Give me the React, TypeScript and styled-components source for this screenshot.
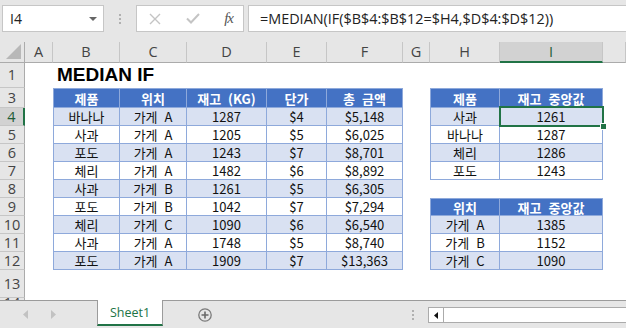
import React from 'react'
import styled, { createGlobalStyle, css } from 'styled-components'

const GREEN = '#217346'
const GRID_LINE = '#c6c6c6'
const TABLE_LINE = '#8ea9db'

const GlobalStyle = createGlobalStyle`
  html, body {
    margin: 0;
    padding: 0;
    background: #fff;
  }
  body {
    width: 626px;
    height: 328px;
    overflow: hidden;
    font-family: "Open Sans", "Noto Sans CJK KR", sans-serif;
  }
`

/* ---------- formula bar ---------- */

const TopBar = styled.div`
  height: 42px;
  box-sizing: border-box;
  padding-top: 5px;
  background: #e6e6e6;
  display: flex;
  align-items: flex-start;
`

const Box = styled.div`
  height: 27px;
  box-sizing: border-box;
  background: #fff;
  border: 1px solid ${GRID_LINE};
  display: flex;
  align-items: center;
`

const NameBox = styled(Box)`
  margin-left: 2px;
  width: 102px;
  padding: 0 6px 0 7px;
  justify-content: space-between;
  font-size: 14px;
  color: #222;
`

const DropArrow = styled.span`
  width: 0;
  height: 0;
  border-left: 4px solid transparent;
  border-right: 4px solid transparent;
  border-top: 4px solid #666;
`

const Grip = styled.div<{ $w: number; $h?: number }>`
  width: ${(p) => p.$w}px;
  height: ${(p) => p.$h ?? 27}px;
  display: flex;
  flex-direction: column;
  align-items: center;
  justify-content: center;
  gap: 2px;
  & > i {
    width: 2px;
    height: 2px;
    background: #b0b0b0;
  }
`

const FxBox = styled(Box)`
  width: 108px;
  padding: 0 10px 0 12px;
  justify-content: space-between;
`

const FxLabel = styled.span`
  font-family: "Liberation Serif", serif;
  font-style: italic;
  font-size: 15px;
  color: #555;
  letter-spacing: -1px;
`

const FormulaBox = styled(Box)`
  margin-left: 4px;
  flex: 1;
  border-right: none;
  padding-left: 11px;
  font-size: 14.4px;
  color: #222;
  white-space: nowrap;
`

/* ---------- sheet grid ---------- */

const Sheet = styled.div`
  display: grid;
  grid-template-columns: 25px 28px 67px 67px 80px 60px 76px 27px 70px 103px 1fr;
  grid-template-rows: 21px 25px 20px repeat(9, 18px) 28px 2px;
  background: #fff;
  overflow: hidden;
`

const HeadCell = styled.div<{ $active?: boolean }>`
  box-sizing: border-box;
  display: flex;
  align-items: center;
  justify-content: center;
  font-size: 14.5px;
  line-height: 16px;
  color: #444;
  background: #e6e6e6;
  overflow: hidden;
  ${(p) =>
    p.$active &&
    css`
      background: #d2d2d2;
      color: #1e5c37;
    `}
`

const ColHead = styled(HeadCell)`
  border-right: 1px solid ${GRID_LINE};
  border-bottom: 1px solid #ababab;
  ${(p) => p.$active && css`border-bottom: 2px solid ${GREEN};`}
`

const RowHead = styled(HeadCell)<{ $clipped?: boolean }>`
  border-right: 1px solid #ababab;
  border-bottom: 1px solid ${GRID_LINE};
  ${(p) => p.$active && css`border-right: 2px solid ${GREEN};`}
  ${(p) =>
    p.$clipped &&
    css`
      align-items: flex-start;
      border-bottom: none;
      line-height: 2px;
      font-size: 14.5px;
      padding-top: 4px;
    `}
`

const Corner = styled(HeadCell)`
  border-right: 1px solid #ababab;
  border-bottom: 1px solid #ababab;
  justify-content: flex-end;
  align-items: flex-end;
  padding: 0 3px 3px 0;
`

const Empty = styled.div``

const Title = styled.div`
  grid-column: span 3;
  align-self: end;
  padding: 0 0 2px 4px;
  font-family: "Liberation Sans", sans-serif;
  font-weight: bold;
  font-size: 19px;
  line-height: 22px;
  color: #000;
  white-space: nowrap;
`

type Kind = 'head' | 'band' | 'plain'

const TableCell = styled.div<{ $kind: Kind; $left?: boolean; $top?: boolean; $selected?: boolean }>`
  position: relative;
  box-sizing: border-box;
  display: flex;
  align-items: center;
  justify-content: center;
  font-family: "Noto Sans CJK KR", sans-serif;
  font-size: 13px;
  line-height: 1;
  word-spacing: 4px;
  white-space: nowrap;
  border-right: 1px solid ${TABLE_LINE};
  border-bottom: 1px solid ${TABLE_LINE};
  ${(p) => p.$left && css`border-left: 1px solid ${TABLE_LINE};`}
  ${(p) => p.$top && css`border-top: 1px solid ${TABLE_LINE};`}
  ${(p) =>
    p.$kind === 'head'
      ? css`
          background: #4472c4;
          color: #fff;
          font-weight: bold;
        `
      : p.$kind === 'band'
        ? css`
            background: #d9e1f2;
            color: #111;
          `
        : css`
            background: #fff;
            color: #111;
          `}
  ${(p) =>
    p.$selected &&
    css`
      z-index: 2;
      &::after {
        content: '';
        position: absolute;
        top: -2px;
        left: -1px;
        right: -2px;
        bottom: -2px;
        border: 2px solid ${GREEN};
      }
      &::before {
        content: '';
        position: absolute;
        right: -5px;
        bottom: -5px;
        width: 5px;
        height: 5px;
        background: ${GREEN};
        border: 1px solid #fff;
        z-index: 3;
      }
    `}
`

/* ---------- sheet tabs ---------- */

const TabBar = styled.div`
  height: 28px;
  box-sizing: border-box;
  background: #e6e6e6;
  border-top: 1px solid #9b9b9b;
  display: flex;
  align-items: flex-start;
`

const Nav = styled.div`
  width: 97px;
  height: 27px;
  display: flex;
  align-items: center;
  padding-left: 23px;
  box-sizing: border-box;
  gap: 23px;
`

const SheetTab = styled.div`
  margin-top: -1px;
  width: 66px;
  height: 26px;
  box-sizing: border-box;
  background: #fff;
  border-left: 1px solid #9b9b9b;
  border-right: 1px solid #9b9b9b;
  border-bottom: 2px solid ${GREEN};
  display: flex;
  align-items: center;
  justify-content: center;
  font-size: 12.5px;
  color: ${GREEN};
`

const AddArea = styled.div`
  width: 246px;
  height: 27px;
  display: flex;
  align-items: center;
  padding-left: 35px;
  box-sizing: border-box;
`

const ScrollBar = styled.div`
  margin: 6px 0 0 11px;
  flex: 1;
  height: 16px;
  box-sizing: border-box;
  background: #fff;
  border: 1px solid #ababab;
  border-right: none;
  display: flex;
`

const ScrollBtn = styled.div`
  width: 14px;
  height: 100%;
  border-right: 1px solid #ababab;
  display: flex;
  align-items: center;
  justify-content: center;
`

/* ---------- data ---------- */

const COLS = ['A', 'B', 'C', 'D', 'E', 'F', 'G', 'H', 'I', 'J']
const ROWS = [1, 3, 4, 5, 6, 7, 8, 9, 10, 11, 12, 13, 14]

const leftHead = ['제품', '위치', '재고 (KG)', '단가', '총 금액']
const leftData = [
  ['바나나', '가게 A', '1287', '$4', '$5,148'],
  ['사과', '가게 A', '1205', '$5', '$6,025'],
  ['포도', '가게 A', '1243', '$7', '$8,701'],
  ['체리', '가게 A', '1482', '$6', '$8,892'],
  ['사과', '가게 B', '1261', '$5', '$6,305'],
  ['포도', '가게 B', '1042', '$7', '$7,294'],
  ['체리', '가게 C', '1090', '$6', '$6,540'],
  ['사과', '가게 A', '1748', '$5', '$8,740'],
  ['포도', '가게 A', '1909', '$7', '$13,363'],
]

// right-hand tables: first row given is the header row
const rightTables = [
  {
    start: 3,
    rows: [
      ['제품', '재고 중앙값'],
      ['사과', '1261'],
      ['바나나', '1287'],
      ['체리', '1286'],
      ['포도', '1243'],
    ],
  },
  {
    start: 9,
    rows: [
      ['위치', '재고 중앙값'],
      ['가게 A', '1385'],
      ['가게 B', '1152'],
      ['가게 C', '1090'],
    ],
  },
]

const cellFor = (row: number, col: number): React.ReactNode => {
  const key = `${row}-${col}`
  if (row === 1) {
    if (col === 1) return <Title key={key}>MEDIAN IF</Title>
    if (col === 2 || col === 3) return null
    return <Empty key={key} />
  }

  // left table, columns B..F
  if (col >= 1 && col <= 5 && row >= 3 && row <= 12) {
    const i = col - 1
    if (row === 3) {
      return (
        <TableCell key={key} $kind="head" $top $left={i === 0}>
          {leftHead[i]}
        </TableCell>
      )
    }
    return (
      <TableCell key={key} $kind={row % 2 === 0 ? 'band' : 'plain'} $left={i === 0}>
        {leftData[row - 4][i]}
      </TableCell>
    )
  }

  // right tables, columns H..I
  if (col === 7 || col === 8) {
    for (const t of rightTables) {
      const r = row - t.start
      if (r >= 0 && r < t.rows.length) {
        const i = col - 7
        const kind: Kind = r === 0 ? 'head' : r % 2 === 1 ? 'band' : 'plain'
        return (
          <TableCell
            key={key}
            $kind={kind}
            $top={r === 0}
            $left={i === 0}
            $selected={row === 4 && col === 8}
          >
            {t.rows[r][i]}
          </TableCell>
        )
      }
    }
  }
  return <Empty key={key} />
}

const CornerTriangle = () => (
  <svg width="15" height="15" viewBox="0 0 15 15">
    <polygon points="15,0 15,15 0,15" fill="#b8b8b8" />
  </svg>
)

const Main = () => {
  return (
    <>
      <GlobalStyle />
      <TopBar>
        <NameBox>
          I4
          <DropArrow />
        </NameBox>
        <Grip $w={32}>
          <i />
          <i />
          <i />
        </Grip>
        <FxBox>
          <svg width="12" height="12" viewBox="0 0 12 12">
            <path d="M1 1 L11 11 M11 1 L1 11" stroke="#c4c4c4" strokeWidth="1.4" />
          </svg>
          <svg width="14" height="11" viewBox="0 0 14 11">
            <path d="M1 5.5 L5 9.5 L13 1" stroke="#c4c4c4" strokeWidth="2" fill="none" />
          </svg>
          <FxLabel>fx</FxLabel>
        </FxBox>
        <FormulaBox>=MEDIAN(IF($B$4:$B$12=$H4,$D$4:$D$12))</FormulaBox>
      </TopBar>

      <Sheet>
        <Corner>
          <CornerTriangle />
        </Corner>
        {COLS.map((c) => (
          <ColHead key={c} $active={c === 'I'}>
            {c === 'J' ? '' : c}
          </ColHead>
        ))}
        {ROWS.map((row) => (
          <React.Fragment key={row}>
            <RowHead $active={row === 4} $clipped={row === 14}>
              {row}
            </RowHead>
            {COLS.map((_, col) => cellFor(row, col))}
          </React.Fragment>
        ))}
      </Sheet>

      <TabBar>
        <Nav>
          <svg width="5" height="9" viewBox="0 0 5 9">
            <polygon points="5,0 5,9 0,4.5" fill="#c2c2c2" />
          </svg>
          <svg width="5" height="9" viewBox="0 0 5 9">
            <polygon points="0,0 0,9 5,4.5" fill="#c2c2c2" />
          </svg>
        </Nav>
        <SheetTab>Sheet1</SheetTab>
        <AddArea>
          <svg width="14" height="14" viewBox="0 0 14 14">
            <circle cx="7" cy="7" r="6.2" stroke="#7a7a7a" strokeWidth="1.3" fill="none" />
            <path d="M7 3.5 V10.5 M3.5 7 H10.5" stroke="#6a6a6a" strokeWidth="1.6" />
          </svg>
        </AddArea>
        <Grip $w={8} $h={27}>
          <i />
          <i />
          <i />
        </Grip>
        <ScrollBar>
          <ScrollBtn>
            <svg width="4" height="7" viewBox="0 0 4 7">
              <polygon points="4,0 4,7 0,3.5" fill="#111" />
            </svg>
          </ScrollBtn>
        </ScrollBar>
      </TabBar>
    </>
  )
}

export default Main
